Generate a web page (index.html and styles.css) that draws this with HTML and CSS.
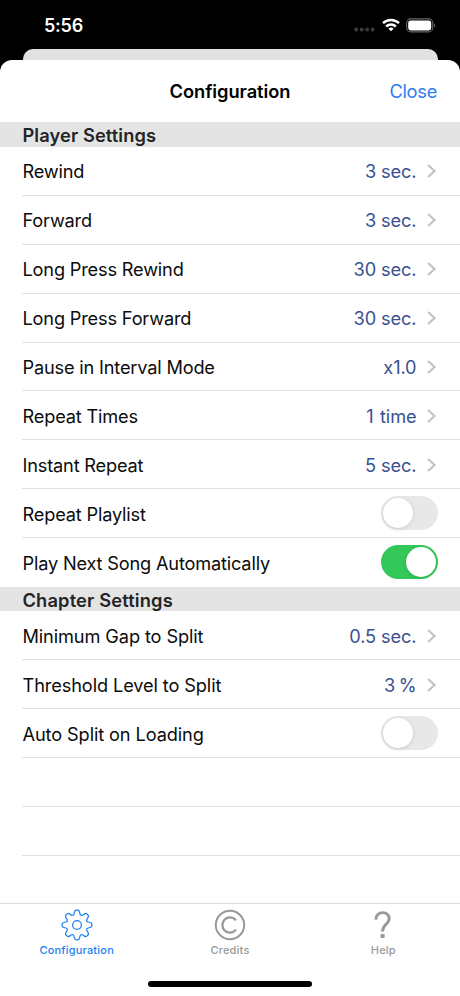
FILE: index.html
```html
<!DOCTYPE html>
<html lang="en">
<head>
<meta charset="utf-8">
<title>Configuration</title>
<link rel="stylesheet" href="styles.css">
</head>
<body>
<svg class="defs" width="0" height="0">
  <symbol id="chevron" viewBox="0 0 10 16"><path d="M1.1 1.9 7.6 8 1.1 14.1" fill="none" stroke="#c2c2c5" stroke-width="2.1"/></symbol>
</svg>
<div class="phone">
  <header class="status">
    <span class="time">5:56</span>
    <div class="indicators">
      <svg class="cell" width="21" height="5" viewBox="0 0 21 5" fill="#3c3c3c"><circle cx="2.2" cy="2.5" r="1.9"/><circle cx="7.7" cy="2.5" r="1.9"/><circle cx="13.2" cy="2.5" r="1.9"/><circle cx="18.7" cy="2.5" r="1.9"/></svg>
      <svg class="wifi" width="18" height="14" viewBox="0 0 18 14" fill="none" stroke="#fff" stroke-width="2.5"><path d="M1 5.2a11.4 11.4 0 0 1 16 0"/><path d="M4.2 8.5a6.9 6.9 0 0 1 9.6 0"/><path d="M9 13.3 6.4 10.7a3.8 3.8 0 0 1 5.2 0z" fill="#fff" stroke="none"/></svg>
      <svg class="battery" width="30" height="15" viewBox="0 0 30 15"><rect x=".7" y=".9" width="26" height="13" rx="4" fill="none" stroke="#666" stroke-width="1.1"/><rect x="2.2" y="2.4" width="23" height="10" rx="2.4" fill="#fff"/><path d="M28.1 5.2v4.4q1.2-.5 1.2-2.2t-1.2-2.2z" fill="#666"/></svg>
    </div>
  </header>
  <div class="back-sheet"></div>
  <main class="sheet">
    <div class="nav"><h1>Configuration</h1><a class="close">Close</a></div>
    <h2>Player Settings</h2>
    <ul class="rows">
      <li><span>Rewind</span><b>3 sec.</b><svg class="chev"><use href="#chevron"/></svg></li>
      <li><span>Forward</span><b>3 sec.</b><svg class="chev"><use href="#chevron"/></svg></li>
      <li><span>Long Press Rewind</span><b>30 sec.</b><svg class="chev"><use href="#chevron"/></svg></li>
      <li><span>Long Press Forward</span><b>30 sec.</b><svg class="chev"><use href="#chevron"/></svg></li>
      <li><span>Pause in Interval Mode</span><b>x1.0</b><svg class="chev"><use href="#chevron"/></svg></li>
      <li><span>Repeat Times</span><b class="times">1 time</b><svg class="chev"><use href="#chevron"/></svg></li>
      <li><span>Instant Repeat</span><b>5 sec.</b><svg class="chev"><use href="#chevron"/></svg></li>
      <li><span>Repeat Playlist</span><i class="switch"></i></li>
      <li><span>Play Next Song Automatically</span><i class="switch on"></i></li>
    </ul>
    <h2 class="chapter">Chapter Settings</h2>
    <ul class="rows open">
      <li><span>Minimum Gap to Split</span><b>0.5 sec.</b><svg class="chev"><use href="#chevron"/></svg></li>
      <li><span>Threshold Level to Split</span><b class="percent">3 %</b><svg class="chev"><use href="#chevron"/></svg></li>
      <li><span>Auto Split on Loading</span><i class="switch"></i></li>
      <li></li>
      <li></li>
    </ul>
  </main>
  <footer>
    <nav class="tabs">
      <div class="tab active">
        <svg width="32" height="32" viewBox="-16 -16 32 32" fill="none" stroke="currentColor" stroke-width="1.25">
          <defs><path id="tooth" d="M-3-11.2-2.5-13.2Q-2.1-14.8-1-14.8H1Q2.1-14.8 2.5-13.2L3-11.2C3.3-9.7 4.52-9.19 5.8-10.04"/></defs>
          <use href="#tooth"/><use href="#tooth" transform="rotate(45)"/><use href="#tooth" transform="rotate(90)"/><use href="#tooth" transform="rotate(135)"/><use href="#tooth" transform="rotate(180)"/><use href="#tooth" transform="rotate(225)"/><use href="#tooth" transform="rotate(270)"/><use href="#tooth" transform="rotate(315)"/>
          <circle r="4.4"/>
        </svg>
        <span>Configuration</span>
      </div>
      <div class="tab">
        <svg width="32" height="32" viewBox="-16 -16 32 32" fill="none" stroke="currentColor"><circle r="14.2" stroke-width="2"/><path d="M6-4.6A7.6 7.6 0 1 0 6 4.6" stroke-width="2.3"/></svg>
        <span>Credits</span>
      </div>
      <div class="tab">
        <svg width="32" height="32" viewBox="-16 -16 32 32" fill="none" stroke="currentColor" stroke-width="2.9"><path d="M-7.2-5.4C-6.9-14.7 6.2-14.5 6.2-6.2C6.2-.6-.5-1.1-.5 6.4"/><path d="M-2.4 11H1.6" stroke-width="3.9"/></svg>
        <span>Help</span>
      </div>
    </nav>
    <div class="home"></div>
  </footer>
</div>
</body>
</html>
```
FILE: styles.css
```css
* { box-sizing: border-box; margin: 0; padding: 0; }
body { background: #000; font-family: Inter, "Liberation Sans", sans-serif; color: #0c0c0c; }
.defs { display: block; height: 0; }
.phone { width: 460px; height: 996px; display: flex; flex-direction: column; overflow: hidden; }
.status { height: 49px; flex: none; display: flex; justify-content: space-between; padding: 14px 24px 0 44px; color: #fff; }
.time { font-size: 18px; line-height: 23px; font-weight: 600; letter-spacing: -.25px; }
.indicators { display: flex; align-items: flex-start; }
.cell { margin: 13px 6.5px 0 0; }
.wifi { margin: 4px 6.5px 0 0; }
.battery { margin-top: 4px; }
.back-sheet { height: 11px; flex: none; margin: 0 22.5px; background: #e1e1e1; border-radius: 10px 10px 0 0; }
.sheet { flex: 1; background: #fff; border-radius: 12px 12px 0 0; }
.nav { height: 62px; display: grid; grid-template-columns: 1fr auto 1fr; align-items: center; padding: 0 23px; }
h1 { grid-column: 2; font-size: 18.3px; font-weight: 600; letter-spacing: -.05px; color: #000; }
.close { justify-self: end; color: #2f7cf0; font-size: 18.3px; letter-spacing: -.3px; }
h2 { height: 25px; line-height: 27px; background: #e4e4e4; padding-left: 22.5px; font-size: 18.3px; font-weight: 600; letter-spacing: .08px; color: #242426; }
.chapter { height: 24.3px; line-height: 26px; letter-spacing: .15px; }
.rows { list-style: none; }
.rows li { height: 48.9px; margin-left: 22px; padding-right: 22.5px; border-bottom: 1px solid #e0e0e2; display: flex; align-items: center; font-size: 18.2px; line-height: 24px; letter-spacing: -.18px; }
.rows:not(.open) li:last-child { border-bottom-color: transparent; }
.rows.open li { letter-spacing: -.11px; }
.rows span { flex: 1; padding: 1px 0 0 .5px; }
.rows b { font-weight: 400; color: #3a5190; padding-top: 1px; letter-spacing: -.1px; }
.rows .times { word-spacing: 1.5px; }
.rows .percent { word-spacing: -1.5px; }
.chev { width: 10px; height: 16px; margin: 1px 1px 0 10px; }
.switch { width: 57px; height: 34px; border-radius: 17px; padding: 2px; background: #e8e8e9; display: flex; }
.switch::before { content: ""; width: 30px; height: 30px; border-radius: 50%; background: #fff; box-shadow: 0 1px 4px rgba(0,0,0,.13); }
.switch.on { background: #34c759; justify-content: flex-end; }
footer { height: 93px; flex: none; background: #fff; border-top: 1px solid #dcdcdc; }
.tabs { display: grid; grid-template-columns: repeat(3, 1fr); height: 76px; padding-top: 4.6px; }
.tab { display: flex; flex-direction: column; align-items: center; color: #999; font-size: 11px; font-weight: 500; line-height: 14px; letter-spacing: .2px; }
.tab span { margin-top: 2px; }
.tab.active { color: #1c7ff0; }
.home { width: 164px; height: 6px; margin: 1px auto 0; border-radius: 3px; background: #000; }
```
